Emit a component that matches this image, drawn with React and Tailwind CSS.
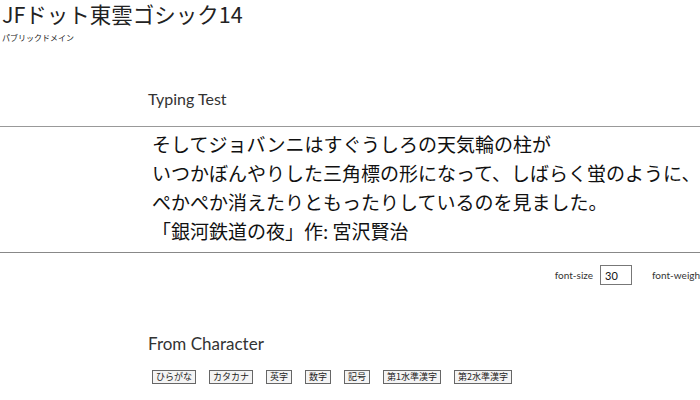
import React, { useState } from 'react';

const jp = { fontFamily: '"Noto Sans CJK JP", sans-serif' };

const charTypes = ['ひらがな', 'カタカナ', '英字', '数字', '記号', '第1水準漢字', '第2水準漢字'];

const App = () => {
  const [size, setSize] = useState('30');

  return (
    <div className="w-full min-h-screen overflow-hidden bg-white text-[#222]">
      <header className="pl-[2px] pt-[1px]" style={jp}>
        <h1 className="text-[21.5px] leading-[26px] whitespace-nowrap">JFドット東雲ゴシック14</h1>
        <p className="mt-[5px] text-[8px] leading-[12px] text-[#222]">パブリックドメイン</p>
      </header>

      <section className="mt-[45px]">
        <h2 className="pl-[148px] text-[16px] leading-[20px] font-['Lato',sans-serif] text-[#333]">Typing Test</h2>
        <div className="mt-[17px] w-[720px] border-t border-[#999]" />
        <div
          className="pl-[152px] pt-[2px] pb-[7px] text-[19px] leading-[29px] whitespace-nowrap text-[#111]"
          style={jp}
        >
          <p>そしてジョバンニはすぐうしろの天気輪の柱が</p>
          <p>いつかぼんやりした三角標の形になって、しばらく蛍のように、</p>
          <p>ぺかぺか消えたりともったりしているのを見ました。</p>
          <p>「銀河鉄道の夜」作: 宮沢賢治</p>
        </div>
        <div className="w-[720px] border-t border-[#888]" />
        <div className="mt-[12px] flex items-center justify-end gap-[20px] w-[718px] whitespace-nowrap font-['Lato',sans-serif] text-[10px] text-[#333]">
          <label className="flex items-center gap-[7px]">
            font-size
            <input
              value={size}
              onChange={(e) => setSize(e.target.value)}
              className="w-[32px] h-[20px] border border-[#777] px-[4px] text-[11px] text-[#111] outline-none"
            />
          </label>
          <span className="w-[66px]">font-weight</span>
        </div>
      </section>

      <section className="mt-[49px] pl-[148px]">
        <h2 className="text-[17px] leading-[20px] font-['Lato',sans-serif] text-[#333]">From Character</h2>
        <div className="mt-[16px] pl-[4px] flex gap-[13px]" style={jp}>
          {charTypes.map((t) => (
            <button
              key={t}
              className="h-[14px] px-[3px] border border-[#666] bg-[#f4f4f4] text-[9px] leading-[12px] text-[#222]"
            >
              {t}
            </button>
          ))}
        </div>
      </section>
    </div>
  );
};

export default App;
